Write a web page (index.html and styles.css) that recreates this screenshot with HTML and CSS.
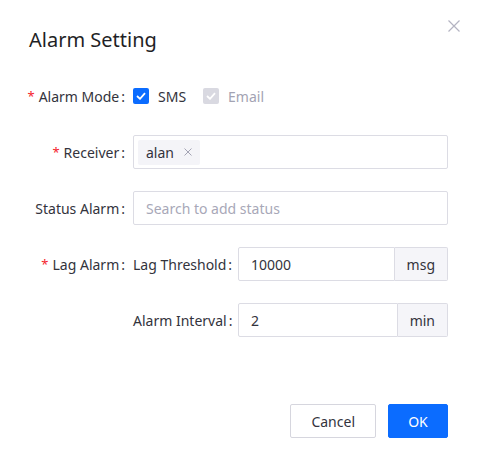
FILE: index.html
```html
<!DOCTYPE html>
<html>
<head>
<meta charset="utf-8">
<link rel="stylesheet" href="styles.css">
</head>
<body>
<div class="dialog">
  <div class="header">
    <div class="title">Alarm Setting</div>
    <button class="close" aria-label="close">
      <svg width="12" height="12" viewBox="0 0 12 12"><path d="M0.5 0.5L11.5 11.5M11.5 0.5L0.5 11.5" stroke="#b4b4c2" stroke-width="1.2" fill="none"/></svg>
    </button>
  </div>
  <div class="form">
    <div class="label"><span class="req">*</span>Alarm Mode<span class="colon">:</span></div>
    <div class="control checks">
      <label class="check">
        <span class="box on"><svg width="10" height="8" viewBox="0 0 10 8"><path d="M1 4L4 6.8L9 1.2" stroke="#fff" stroke-width="1.8" fill="none"/></svg></span>
        <span>SMS</span>
      </label>
      <label class="check disabled">
        <span class="box off"><svg width="10" height="8" viewBox="0 0 10 8"><path d="M1 4L4 6.8L9 1.2" stroke="#fff" stroke-width="1.8" fill="none"/></svg></span>
        <span>Email</span>
      </label>
    </div>

    <div class="label"><span class="req">*</span>Receiver<span class="colon">:</span></div>
    <div class="control">
      <div class="input tags">
        <span class="tag">alan<svg class="tagx" width="8" height="8" viewBox="0 0 8 8"><path d="M0.5 0.5L7.5 7.5M7.5 0.5L0.5 7.5" stroke="#a4a4b4" stroke-width="1" fill="none"/></svg></span>
      </div>
    </div>

    <div class="label">Status Alarm<span class="colon">:</span></div>
    <div class="control">
      <div class="input"><span class="placeholder">Search to add status</span></div>
    </div>

    <div class="label"><span class="req">*</span>Lag Alarm<span class="colon">:</span></div>
    <div class="control sub">
      <div class="sublabel">Lag Threshold<span class="colon">:</span></div>
      <div class="group">
        <div class="input grow">10000</div>
        <div class="addon">msg</div>
      </div>
    </div>

    <div class="label"></div>
    <div class="control sub">
      <div class="sublabel">Alarm Interval<span class="colon">:</span></div>
      <div class="group">
        <div class="input grow">2</div>
        <div class="addon">min</div>
      </div>
    </div>
  </div>
  <div class="footer">
    <button class="btn">Cancel</button>
    <button class="btn primary">OK</button>
  </div>
</div>
</body>
</html>
```

FILE: styles.css
```css
* { box-sizing: border-box; }
html, body { margin: 0; background: #fff; }
body {
  font-family: "Noto Sans", "Open Sans", sans-serif;
  font-size: 14px;
  color: #33333c;
}
.dialog {
  width: 477px;
  height: 458px;
  padding: 20px 29px 0 28px;
}
.header {
  position: relative;
  height: 59px;
}
.title {
  font-size: 20px;
  line-height: 28px;
  color: #1f1f26;
  padding-top: 6px;
  padding-left: 1px;
}
.close {
  position: absolute;
  right: -12px;
  top: 0;
  border: 0;
  background: none;
  padding: 0;
  width: 12px;
  height: 12px;
  display: flex;
}
.form {
  display: grid;
  grid-template-columns: 98px 1fr;
  column-gap: 7px;
  row-gap: 22px;
}
.label {
  height: 34px;
  display: flex;
  align-items: center;
  justify-content: flex-end;
  white-space: nowrap;
  color: #33333c;
}
.req { color: #f5222d; margin-right: 4px; font-size: 13px; }
.colon { margin-left: 2px; margin-right: 1px; }
.control { height: 34px; display: flex; align-items: center; }
.checks { gap: 0; }
.check { display: flex; align-items: center; margin-right: 17px; }
.box {
  width: 16px; height: 16px; border-radius: 2px;
  display: flex; align-items: center; justify-content: center;
  margin-right: 9px;
}
.box.on { background: #0b6cff; }
.box.off { background: #d9d9e1; }
.check.disabled { color: #a3a3b3; }
.input {
  height: 34px;
  width: 100%;
  border: 1px solid #dcdce4;
  border-radius: 2px;
  display: flex;
  align-items: center;
  padding: 0 12px;
  background: #fff;
}
.tags { padding: 0 4px; }
.tag {
  height: 25px;
  background: #f4f4f8;
  border-radius: 2px;
  display: flex;
  align-items: center;
  padding: 0 8px 0 8px;
  color: #33333c;
}
.tagx { margin-left: 10px; }
.placeholder { color: #a8a8b8; }
.sub { gap: 0; }
.sublabel {
  width: 99px;
  white-space: nowrap;
  text-align: right;
  margin-right: 6px;
}
.group { display: flex; flex: 1; height: 34px; }
.grow { flex: 1; border-radius: 2px 0 0 2px; }
.addon {
  height: 34px;
  border: 1px solid #dcdce4;
  border-left: 0;
  background: #f5f5f9;
  display: flex;
  align-items: center;
  padding: 0 12px;
  border-radius: 0 2px 2px 0;
}
.footer {
  display: flex;
  justify-content: flex-end;
  gap: 12px;
  margin-top: 67px;
}
.btn {
  height: 34px;
  min-width: 60px;
  padding: 0 20px;
  border: 1px solid #d6d6de;
  border-radius: 2px;
  background: #fff;
  font-family: inherit;
  font-size: 14px;
  color: #33333c;
}
.btn.primary {
  background: #0b6cff;
  border-color: #0b6cff;
  color: #fff;
  padding: 0 16px;
}
```
